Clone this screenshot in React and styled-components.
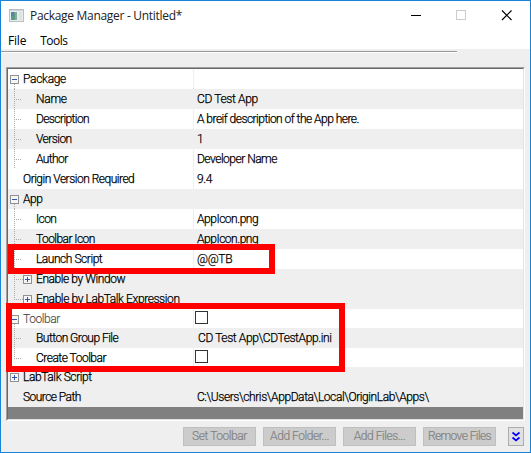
import React from "react";
import styled, { createGlobalStyle } from "styled-components";

const Global = createGlobalStyle`
  * { box-sizing: border-box; }
  html, body { margin: 0; padding: 0; background: #efefef; }
`;

const Window = styled.div`
  position: relative;
  display: flex;
  flex-direction: column;
  width: 531px;
  height: 453px;
  overflow: hidden;
  border: 1px solid #1883d7;
  background: #efefef;
  color: #000;
  font-family: Roboto, "Liberation Sans", sans-serif;
  font-size: 12px;
`;

const TitleBar = styled.header`
  display: flex;
  align-items: center;
  height: 29px;
  padding-left: 8px;
  background: #fff;
`;

const Title = styled.span`
  flex: 1;
  margin-left: 6px;
  color: #222;
  font: 12px/20px "Open Sans", sans-serif;
  letter-spacing: ${(p) => p.$track}px;
  white-space: nowrap;
`;

const Controls = styled.div`
  display: flex;
  svg { display: block; }
`;

const MenuBar = styled.nav`
  display: flex;
  height: 19px;
  padding-left: 7px;
  gap: 14px;
  background: #fff;
  font: 12px/22px "Open Sans", sans-serif;
`;

const MenuItem = styled.span`
  letter-spacing: ${(p) => p.$track}px;
`;

const Rule = styled.div`
  width: 456px;
  height: 2px;
  margin: 2px 0 14px;
  border-top: 1px solid #999;
  border-bottom: 1px solid #fff;
`;

const Grid = styled.main`
  width: 519px;
  height: 354px;
  margin-left: 5px;
  border: 1px solid;
  border-color: #a0a0a0 #fff #fff #a0a0a0;
`;

const GridInner = styled.div`
  height: 352px;
  border: 1px solid;
  border-color: #696969 #e3e3e3 #e3e3e3 #696969;
  background: #808080;
`;

const Row = styled.div`
  display: grid;
  grid-template-columns: 185px 1fr;
  height: ${(p) => p.$h}px;
  background: ${(p) => (p.$shade ? "#efefef" : "#fff")};
`;

const NameCell = styled.div`
  display: flex;
  overflow: hidden;
  svg { flex: none; display: block; }
`;

const ValueCell = styled.div`
  display: flex;
  padding-left: ${(p) => p.$pad}px;
  border-left: 1px solid #efefef;
  svg { display: block; }
`;

const Label = styled.span`
  color: ${(p) => (p.$dim ? "#444" : "#000")};
  font-weight: 300;
  line-height: 20px;
  letter-spacing: ${(p) => p.$track}px;
  white-space: nowrap;
  -webkit-text-stroke: ${(p) => (p.$dim ? 0.1 : 0.25)}px currentColor;
`;

const Highlight = styled.div`
  position: absolute;
  left: ${(p) => p.$x - 1}px;
  top: ${(p) => p.$y - 1}px;
  width: ${(p) => p.$w}px;
  height: ${(p) => p.$h}px;
  border: 6px solid #f00;
`;

const Footer = styled.footer`
  display: flex;
  gap: 7px;
  padding: 6px 0 0 182px;
`;

const Button = styled.button`
  width: 73px;
  height: 19px;
  padding: 0;
  border: 1px solid #bfbfbf;
  background: #ccc;
  color: #838383;
  font: 300 12px/17px Roboto, sans-serif;
  letter-spacing: ${(p) => p.$track}px;
  white-space: nowrap;
  -webkit-text-stroke: 0.2px currentColor;
`;

const MoreButton = styled(Button)`
  width: 16px;
  margin-left: 5px;
  border-color: #adadad;
  background: #e1e1e1;
  svg { display: block; }
`;

function Tree({ kind, h }) {
  const nested = kind === "child" || kind === "last" || kind === "nested" || kind === "nestedLast";
  const boxed = kind === "minus" || kind === "plus" || kind.startsWith("nested");
  const width = nested ? 28 : 15;
  const bx = nested ? 15.5 : 2.5;
  const end = kind === "last" || kind === "nestedLast" ? 10 : h;
  return (
    <svg width={width} height={h} shapeRendering="crispEdges" fill="none">
      {nested && (
        <path d={`M6.5 0V${end}M6 10.5H${boxed ? 15 : 14}`} stroke="#aaa" strokeDasharray="1 1" />
      )}
      {kind === "minus" && <path d={`M6.5 15V${h}`} stroke="#aaa" strokeDasharray="1 1" />}
      {boxed && (
        <>
          <rect x={bx} y="6.5" width="8" height="8" fill="#f6f6f6" stroke="#919191" />
          <path d={`M${bx + 1.5} 10.5h5`} stroke="#3455ad" />
          {kind !== "minus" && <path d={`M${bx + 4} 8v5`} stroke="#3455ad" />}
        </>
      )}
    </svg>
  );
}

function CheckBox() {
  return (
    <svg width="13" height="20" shapeRendering="crispEdges">
      <rect x="0.5" y="2.5" width="12" height="12" fill="#fff" stroke="#333" />
    </svg>
  );
}

const rows = [
  { kind: "minus", name: "Package", nt: -0.3 },
  { kind: "child", name: "Name", nt: -0.25, value: "CD Test App", vt: -0.36, shade: true },
  { kind: "child", name: "Description", nt: -0.6, value: "A breif description of the App here.", vt: -0.53 },
  { kind: "child", name: "Version", nt: -0.55, value: "1", shade: true },
  { kind: "child", name: "Author", nt: -0.6, value: "Developer Name", vt: -0.5 },
  { kind: "leaf", name: "Origin Version Required", nt: -0.5, value: "9.4", vt: -0.4 },
  { kind: "minus", name: "App", nt: -0.5, shade: true },
  { kind: "child", name: "Icon", nt: -0.6, value: "AppIcon.png", vt: -0.47 },
  { kind: "child", name: "Toolbar Icon", nt: -0.56, value: "AppIcon.png", vt: -0.47, shade: true },
  { kind: "child", name: "Launch Script", nt: -0.46, value: "@@TB", vt: -0.3 },
  { kind: "nested", name: "Enable by Window", nt: -0.43, shade: true },
  { kind: "nestedLast", name: "Enable by LabTalk Expression", nt: -0.41, shade: true },
  { kind: "minus", name: "Toolbar", nt: -0.42, check: true, dim: true, h: 19 },
  { kind: "child", name: "Button Group File", nt: -0.53, value: "CD Test App\\CDTestApp.ini", vt: -0.4, pad: 4, shade: true },
  { kind: "last", name: "Create Toolbar", nt: -0.5, check: true, h: 19 },
  { kind: "plus", name: "LabTalk Script", nt: -0.4, shade: true },
  { kind: "leaf", name: "Source Path", nt: -0.55, value: "C:\\Users\\chris\\AppData\\Local\\OriginLab\\Apps\\", vt: -0.42, shade: true },
];

export default function App() {
  return (
    <>
      <Global />
      <Window>
        <TitleBar>
          <svg width="15" height="13" shapeRendering="crispEdges">
            <rect x="0.5" y="0.5" width="14" height="12" fill="#e9edee" stroke="#b9bec2" />
            <rect x="1" y="1" width="13" height="1" fill="#ccd3dc" />
            <rect x="2" y="3" width="6" height="8" fill="#5b9a86" />
            <rect x="2" y="3" width="3" height="4" fill="#5c82a4" />
            <rect x="6" y="3" width="2" height="8" fill="#7fae9c" />
            <rect x="10" y="3" width="3" height="8" fill="#dbe5df" />
          </svg>
          <Title $track={-0.3}>Package Manager - Untitled*</Title>
          <Controls>
            <svg width="120" height="29" fill="none">
              <path d="M1 14.5h10" stroke="#000" />
              <rect x="46.5" y="9.5" width="9" height="9" stroke="#ccc" />
              <path d="M92 9.5l9.5 9.5M101.5 9.5L92 19" stroke="#000" strokeWidth="1.2" />
            </svg>
          </Controls>
        </TitleBar>
        <MenuBar>
          <MenuItem $track={-0.2}>File</MenuItem>
          <MenuItem $track={-0.5}>Tools</MenuItem>
        </MenuBar>
        <Rule />
        <Grid>
          <GridInner>
            {rows.map((r) => (
              <Row key={r.name} $h={r.h || 20} $shade={r.shade}>
                <NameCell>
                  <Tree kind={r.kind} h={r.h || 20} />
                  <Label $track={r.nt || 0} $dim={r.dim}>{r.name}</Label>
                </NameCell>
                <ValueCell $pad={r.check ? 1 : r.pad || 3}>
                  {r.check ? <CheckBox /> : <Label $track={r.vt || 0}>{r.value}</Label>}
                </ValueCell>
              </Row>
            ))}
          </GridInner>
        </Grid>
        <Footer>
          <Button $track={-0.45}>Set Toolbar</Button>
          <Button $track={-0.45}>Add Folder...</Button>
          <Button $track={-0.45}>Add Files...</Button>
          <Button $track={-0.6}>Remove Files</Button>
          <MoreButton $track={0} aria-label="More">
            <svg width="14" height="17" fill="none" stroke="#00f" strokeWidth="1.7">
              <path d="M3.5 4.5l3.5 3L10.5 4.5M3.5 9.5l3.5 3L10.5 9.5" />
            </svg>
          </MoreButton>
        </Footer>
        <Highlight $x={8} $y={244} $w={267} $h={30} />
        <Highlight $x={6} $y={303} $w={339} $h={69} />
      </Window>
    </>
  );
}
